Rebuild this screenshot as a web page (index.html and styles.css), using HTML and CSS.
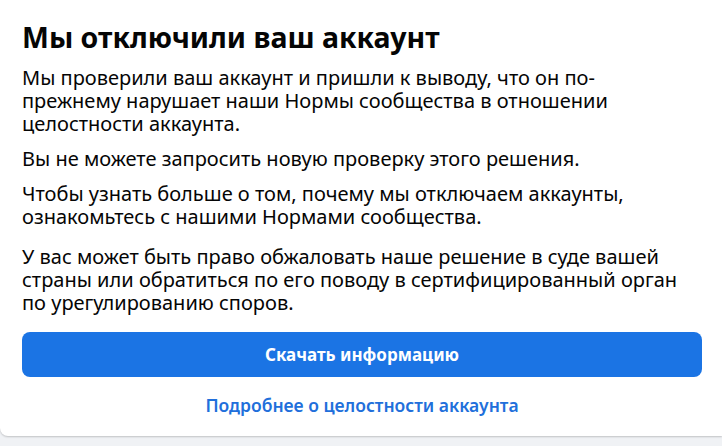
FILE: index.html
```html
<!DOCTYPE html>
<html lang="ru">
<head>
<meta charset="utf-8">
<title>Мы отключили ваш аккаунт</title>
<link rel="stylesheet" href="styles.css">
</head>
<body>
<div class="card">
  <h1 class="title">Мы отключили ваш аккаунт</h1>
  <p class="text">Мы проверили ваш аккаунт и пришли к выводу, что он по-прежнему нарушает наши Нормы сообщества в отношении целостности аккаунта.</p>
  <p class="text">Вы не можете запросить новую проверку этого решения.</p>
  <p class="text">Чтобы узнать больше о том, почему мы отключаем аккаунты, ознакомьтесь с нашими Нормами сообщества.</p>
  <p class="text text-legal">У вас может быть право обжаловать наше решение в суде вашей страны или обратиться по его поводу в сертифицированный орган по урегулированию споров.</p>
  <button class="btn" type="button">Скачать информацию</button>
  <a class="link" href="#">Подробнее о целостности аккаунта</a>
</div>
</body>
</html>
```

FILE: styles.css
```css
html, body {
  margin: 0;
  padding: 0;
}
body {
  background: #f0f2f5;
  font-family: "Noto Sans", "Open Sans", sans-serif;
  color: #050505;
  width: 722px;
  height: 446px;
  overflow: hidden;
}
.card {
  background: #ffffff;
  width: 722px;
  box-sizing: border-box;
  padding: 20px 20px 20px 22px;
  border-radius: 0 0 0 8px;
  box-shadow: 0 1px 2px rgba(0, 0, 0, 0.2);
  display: flex;
  flex-direction: column;
}
.title {
  margin: 0;
  font-size: 28.5px;
  line-height: 34px;
  font-weight: 700;
  color: #050505;
}
.text {
  margin: 12px 0 0;
  font-size: 20px;
  line-height: 23px;
  color: #050505;
  max-width: 665px;
}
.text + .text {
  margin-top: 12px;
}
.text + .text-legal {
  margin-top: 17px;
}
.btn {
  margin-top: 18px;
  height: 45px;
  border: none;
  border-radius: 8px;
  background: #1b74e4;
  color: #ffffff;
  font-family: inherit;
  font-size: 17px;
  font-weight: 700;
}
.link {
  margin-top: 17px;
  align-self: center;
  color: #216fdb;
  font-size: 17.5px;
  font-weight: 600;
  line-height: 22px;
  text-decoration: none;
}
```
